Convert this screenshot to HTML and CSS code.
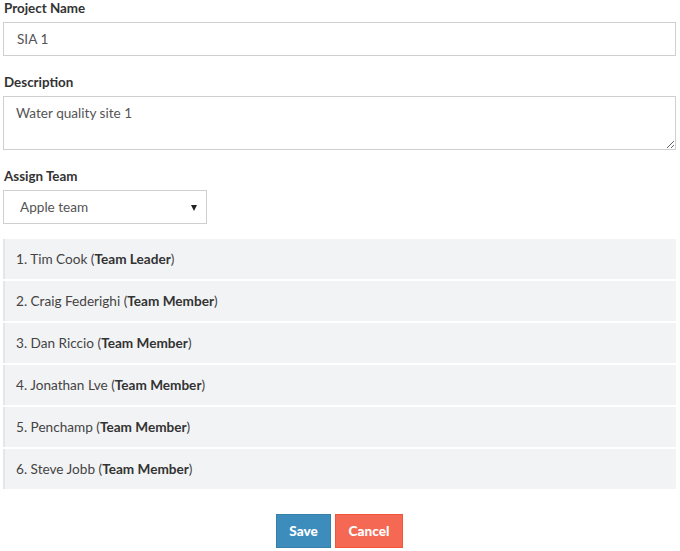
FILE: index.html
```html
<!DOCTYPE html>
<html>
<head>
<meta charset="utf-8">
<link rel="stylesheet" href="styles.css">
</head>
<body>
<form class="form">
  <div class="group">
    <label class="label">Project Name</label>
    <input class="control" type="text" value="SIA 1">
  </div>
  <div class="group">
    <label class="label">Description</label>
    <textarea class="control area">Water quality site 1</textarea>
  </div>
  <div class="group">
    <label class="label">Assign Team</label>
    <div class="select-wrap">
      <select class="select"><option>Apple team</option></select>
    </div>
  </div>
  <ul class="members">
    <li class="member">1. Tim Cook (<b>Team Leader</b>)</li>
    <li class="member">2. Craig Federighi (<b>Team Member</b>)</li>
    <li class="member">3. Dan Riccio (<b>Team Member</b>)</li>
    <li class="member">4. Jonathan Lve (<b>Team Member</b>)</li>
    <li class="member">5. Penchamp (<b>Team Member</b>)</li>
    <li class="member">6. Steve Jobb (<b>Team Member</b>)</li>
  </ul>
  <div class="actions">
    <button type="button" class="btn save">Save</button>
    <button type="button" class="btn cancel">Cancel</button>
  </div>
</form>
</body>
</html>
```
FILE: styles.css
```css
* { box-sizing: border-box; }
body {
  margin: 0;
  padding: 0 4px 0 3px;
  font-family: "Lato", "Open Sans", sans-serif;
  font-size: 13.6px;
  color: #333;
  background: #fff;
}
.form { display: flex; flex-direction: column; }
.group { display: flex; flex-direction: column; margin-bottom: 18px; }
.group:nth-child(3) { margin-bottom: 15px; }
.label {
  font-weight: bold;
  font-size: 13.4px;
  line-height: 16px;
  margin-bottom: 6px;
  padding-left: 1px;
  color: #333;
}
.control {
  height: 34px;
  border: 1px solid #cfcfcf;
  padding: 0 13px;
  font-family: inherit;
  font-size: 13.6px;
  color: #555;
  outline: none;
  background: #fff;
}
.area {
  height: 54px;
  padding: 7px 12px;
  line-height: 18px;
  resize: vertical;
}
.select-wrap { position: relative; width: 204px; }
.select {
  width: 204px;
  height: 34px;
  border: 1px solid #cfcfcf;
  padding: 0 16px;
  font-family: inherit;
  font-size: 13.6px;
  color: #555;
  background: #fff;
  appearance: none;
  -webkit-appearance: none;
  outline: none;
  border-radius: 0;
}
.select-wrap::after {
  content: "";
  position: absolute;
  right: 10px;
  top: 15px;
  border-left: 3.5px solid transparent;
  border-right: 3.5px solid transparent;
  border-top: 6px solid #222;
}
.members {
  list-style: none;
  margin: 0 0 25px 0;
  padding: 0;
  display: flex;
  flex-direction: column;
  gap: 2px;
}
.member {
  height: 40px;
  display: flex;
  align-items: center;
  padding-left: 11px;
  background: #f2f3f5;
  border-left: 2px solid #e5e6e8;
  color: #444;
}
.member b { color: #333; }
.actions { display: flex; justify-content: center; gap: 4px; }
.btn {
  height: 34px;
  border: 1px solid;
  font-family: inherit;
  font-size: 13.6px;
  font-weight: 900;
  color: #fff;
  padding: 0;
  border-radius: 0;
}
.save { background: #3c8dbc; border-color: #367fa9; width: 55px; }
.cancel { background: #f56954; border-color: #f4543c; width: 68px; }
```
